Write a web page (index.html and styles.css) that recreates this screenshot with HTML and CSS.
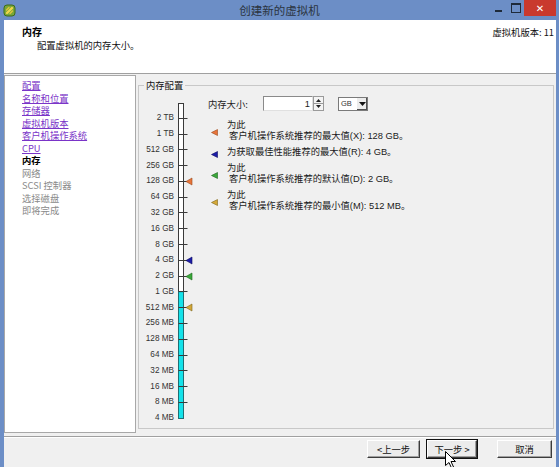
FILE: index.html
```html
<!DOCTYPE html>
<html lang="zh-CN">
<head>
<meta charset="utf-8">
<title>创建新的虚拟机</title>
<link rel="stylesheet" href="styles.css">
</head>
<body>
<div class="titlebar">
  <svg class="app-icon" viewBox="0 0 13 13" width="13" height="13">
    <rect x="1" y="1" width="11" height="11" rx="3" fill="#79a83a" stroke="#3f6a18" stroke-width="1"/>
    <path d="M4 9 L9 4" stroke="#f2d64a" stroke-width="2.4" stroke-linecap="round"/>
    <path d="M3.5 6 L6 3.5 M7 9.5 L9.5 7" stroke="#e8c53a" stroke-width="1.2" stroke-linecap="round"/>
  </svg>
  <div class="title">创建新的虚拟机</div>
  <div class="controls">
    <span class="ctl ctl-min"></span>
    <span class="ctl ctl-max"></span>
    <span class="ctl ctl-close">✕</span>
  </div>
</div>
<div class="client">
  <div class="header">
    <div class="header-text">
      <div class="h-title">内存</div>
      <div class="h-sub">配置虚拟机的内存大小。</div>
    </div>
    <div class="h-version">虚拟机版本: 11</div>
  </div>
  <div class="main">
    <nav class="steps">
      <a class="step link" href="#">配置</a>
      <a class="step link" href="#">名称和位置</a>
      <a class="step link" href="#">存储器</a>
      <a class="step link" href="#">虚拟机版本</a>
      <a class="step link" href="#">客户机操作系统</a>
      <a class="step link" href="#">CPU</a>
      <span class="step current">内存</span>
      <span class="step off">网络</span>
      <span class="step off">SCSI 控制器</span>
      <span class="step off">选择磁盘</span>
      <span class="step off">即将完成</span>
    </nav>
    <fieldset class="group">
      <legend>内存配置</legend>
      <div class="group-inner">
        <div class="scale">
          <div class="scale-labels">
            <span>2 TB</span><span>1 TB</span><span>512 GB</span><span>256 GB</span><span>128 GB</span>
            <span>64 GB</span><span>32 GB</span><span>16 GB</span><span>8 GB</span><span>4 GB</span>
            <span>2 GB</span><span>1 GB</span><span>512 MB</span><span>256 MB</span><span>128 MB</span>
            <span>64 MB</span><span>32 MB</span><span>16 MB</span><span>8 MB</span><span>4 MB</span>
          </div>
          <svg class="scale-bar" width="20" height="322" viewBox="0 0 20 322">
            <rect x="2.5" y="2.5" width="5" height="315" fill="#fff" stroke="#3a3a3a"/>
            <rect x="3" y="190.7" width="4" height="126.8" fill="#14e2ea"/>
            <rect x="2.5" y="190.7" width="5" height="126.8" fill="none" stroke="#1f6f74"/>
            <g stroke="#3a3a3a" stroke-width="1">
              <line x1="2.5" y1="17.5" x2="11.5" y2="17.5"/>
              <line x1="2.5" y1="33.5" x2="11.5" y2="33.5"/>
              <line x1="2.5" y1="48.5" x2="11.5" y2="48.5"/>
              <line x1="2.5" y1="64.5" x2="11.5" y2="64.5"/>
              <line x1="2.5" y1="80.5" x2="11.5" y2="80.5"/>
              <line x1="2.5" y1="96.5" x2="11.5" y2="96.5"/>
              <line x1="2.5" y1="111.5" x2="11.5" y2="111.5"/>
              <line x1="2.5" y1="127.5" x2="11.5" y2="127.5"/>
              <line x1="2.5" y1="143.5" x2="11.5" y2="143.5"/>
              <line x1="2.5" y1="159.5" x2="11.5" y2="159.5"/>
              <line x1="2.5" y1="175.5" x2="11.5" y2="175.5"/>
              <line x1="2.5" y1="190.5" x2="11.5" y2="190.5"/>
              <line x1="2.5" y1="206.5" x2="11.5" y2="206.5"/>
              <line x1="2.5" y1="222.5" x2="11.5" y2="222.5"/>
              <line x1="2.5" y1="238.5" x2="11.5" y2="238.5"/>
              <line x1="2.5" y1="254.5" x2="11.5" y2="254.5"/>
              <line x1="2.5" y1="269.5" x2="11.5" y2="269.5"/>
              <line x1="2.5" y1="285.5" x2="11.5" y2="285.5"/>
              <line x1="2.5" y1="301.5" x2="11.5" y2="301.5"/>
            </g>
            <polygon points="10,80.5 16,77 16,84" fill="#e8743a" stroke="#9a4a1c" stroke-width="0.6"/>
            <polygon points="10,159.5 16,156 16,163" fill="#1c1ca8" stroke="#0c0c60" stroke-width="0.6"/>
            <polygon points="10,175.5 16,172 16,179" fill="#3aa83a" stroke="#1c641c" stroke-width="0.6"/>
            <polygon points="10,206.5 16,203 16,210" fill="#d4a838" stroke="#7e6418" stroke-width="0.6"/>
          </svg>
        </div>
        <div class="config">
          <div class="size-row">
            <span class="size-label">内存大小:</span>
            <div class="num-input"><span>1</span></div>
            <div class="spinner">
              <svg width="9" height="13" viewBox="0 0 9 13">
                <path d="M2 5 L4.5 2 L7 5 Z" fill="#222"/>
                <line x1="0" y1="6.5" x2="9" y2="6.5" stroke="#9a9a9a"/>
                <path d="M2 8 L4.5 11 L7 8 Z" fill="#222"/>
              </svg>
            </div>
            <div class="unit-select">
              <span class="unit-val">GB</span>
              <span class="unit-btn">
                <svg width="7" height="4" viewBox="0 0 7 4"><path d="M0 0 H7 L3.5 4 Z" fill="#111"/></svg>
              </span>
            </div>
          </div>
          <ul class="recs">
            <li class="rec">
              <svg class="mk" width="7" height="7" viewBox="0 0 7 7"><polygon points="0.5,3.5 6.5,0.5 6.5,6.5" fill="#e8743a" stroke="#9a4a1c" stroke-width="0.6"/></svg>
              <div class="rec-text"><div>为此</div><div class="l2">客户机操作系统推荐的最大值(X): 128 GB。</div></div>
            </li>
            <li class="rec">
              <svg class="mk" width="7" height="7" viewBox="0 0 7 7"><polygon points="0.5,3.5 6.5,0.5 6.5,6.5" fill="#1c1ca8" stroke="#0c0c60" stroke-width="0.6"/></svg>
              <div class="rec-text"><div>为获取最佳性能推荐的最大值(R): 4 GB。</div></div>
            </li>
            <li class="rec">
              <svg class="mk" width="7" height="7" viewBox="0 0 7 7"><polygon points="0.5,3.5 6.5,0.5 6.5,6.5" fill="#3aa83a" stroke="#1c641c" stroke-width="0.6"/></svg>
              <div class="rec-text"><div>为此</div><div class="l2">客户机操作系统推荐的默认值(D): 2 GB。</div></div>
            </li>
            <li class="rec">
              <svg class="mk" width="7" height="7" viewBox="0 0 7 7"><polygon points="0.5,3.5 6.5,0.5 6.5,6.5" fill="#d4a838" stroke="#7e6418" stroke-width="0.6"/></svg>
              <div class="rec-text"><div>为此</div><div class="l2">客户机操作系统推荐的最小值(M): 512 MB。</div></div>
            </li>
          </ul>
        </div>
      </div>
    </fieldset>
  </div>
  <div class="footer">
    <button class="btn btn-back">&lt;上一步</button>
    <button class="btn btn-next">下一步 &gt;</button>
    <button class="btn btn-cancel">取消</button>
  </div>
</div>
<svg class="cursor" width="12" height="18" viewBox="0 0 12 18">
  <path d="M0.5 0.5 L0.5 14.5 L4 11.5 L6.5 17 L8.5 16 L6 10.5 L10.5 10.5 Z" fill="#fff" stroke="#000" stroke-width="1"/>
</svg>
</body>
</html>
```

FILE: styles.css
```css
* { box-sizing: border-box; }
html, body { margin: 0; padding: 0; }
body {
  width: 559px;
  height: 467px;
  overflow: hidden;
  position: relative;
  background: #6c8ec6;
  font-family: "Liberation Sans", "Noto Sans CJK SC", sans-serif;
  font-size: 9.3px;
  color: #1c1c1c;
}

/* title bar */
.titlebar {
  height: 20px;
  display: grid;
  grid-template-columns: 1fr auto 1fr;
  align-items: center;
}
.app-icon { margin-left: 3px; display: block; }
.title {
  font-family: "Noto Sans CJK SC", sans-serif;
  font-size: 11.5px;
  line-height: 20px;
  color: #2b3440;
}
.controls {
  justify-self: end;
  align-self: start;
  display: flex;
  margin-right: 3px;
}
.ctl {
  width: 17px;
  height: 16px;
  display: flex;
  align-items: center;
  justify-content: center;
}
.ctl-min::before {
  content: "";
  width: 7px;
  height: 2px;
  margin-top: 5px;
  background: #1e2a3a;
}
.ctl-max::before {
  content: "";
  width: 8px;
  height: 7px;
  border: 1px solid #1e2a3a;
  border-top-width: 2px;
}
.ctl-close {
  width: 32px;
  background: #c9392e;
  color: #fff;
  font-size: 10px;
  font-family: "DejaVu Sans", sans-serif;
  font-weight: bold;
}

/* client */
.client {
  margin: 0 3px 0 4px;
  height: 447px;
  background: #f0f0f0;
  display: flex;
  flex-direction: column;
}
.header {
  height: 54px;
  flex: none;
  background: #fff;
  border-bottom: 1px solid #a0a0a0;
  display: flex;
  justify-content: space-between;
  padding: 6px 2px 0 18px;
  font-family: "Noto Sans CJK SC", sans-serif;
}
.h-title { font-weight: bold; font-size: 10px; line-height: 12px; color: #000; }
.h-sub { margin: 1px 0 0 15px; line-height: 12px; color: #111; }
.h-version { line-height: 12px; color: #111; }

.main {
  height: 362px;
  flex: none;
  display: flex;
  align-items: flex-start;
  gap: 2px;
  padding-top: 1px;
}
.steps {
  width: 132px;
  height: 358px;
  background: #fff;
  border: 1px solid #a8a8a8;
  padding: 3px 0 0 17px;
  display: flex;
  flex-direction: column;
  align-items: flex-start;
  font-family: "Noto Sans CJK SC", sans-serif;
}
.step { height: 12.5px; line-height: 12.5px; white-space: nowrap; }
.step.link { color: #7a34c8; text-decoration: underline; }
.step.current { font-weight: bold; color: #000; }
.step.off { color: #8a8a8a; }

.group {
  margin: 4px 0 0 0;
  padding: 0;
  width: 416px;
  height: 350px;
  min-width: 0;
  border: 1px solid #c8c8c8;
}
.group legend {
  margin-left: 5px;
  padding: 0 2px;
  line-height: 12px;
  font-family: "Noto Sans CJK SC", sans-serif;
  color: #111;
}
.group-inner { display: flex; align-items: flex-start; }

.scale { display: flex; margin-top: 10px; }
.scale-labels {
  width: 37px;
  padding: 9.3px 2px 0 0;
  display: flex;
  flex-direction: column;
  align-items: flex-end;
  font-family: "Liberation Sans", sans-serif;
  font-size: 8.2px;
  color: #333;
}
.scale-labels span { height: 15.79px; line-height: 15.79px; white-space: nowrap; }
.scale-bar { display: block; }

.config { margin-left: 12px; padding-top: 5px; }
.size-row { display: flex; align-items: center; height: 15px; }
.size-label { width: 55px; font-family: "Noto Sans CJK SC", sans-serif; }
.num-input {
  width: 50px;
  height: 15px;
  background: #fff;
  border: 1px solid #8a8a8a;
  border-right-color: #e0e0e0;
  border-bottom-color: #e0e0e0;
  display: flex;
  align-items: center;
  justify-content: flex-end;
  padding-right: 2px;
}
.spinner {
  width: 11px;
  height: 15px;
  border: 1px solid #9a9a9a;
  background: #f4f4f4;
  display: flex;
  align-items: center;
  justify-content: center;
}
.spinner svg { display: block; }
.unit-select {
  margin-left: 14px;
  width: 30px;
  height: 14px;
  background: #fff;
  border: 1px solid #7a7a7a;
  display: flex;
  align-items: stretch;
  justify-content: space-between;
}
.unit-val { font-size: 7.5px; line-height: 12px; padding-left: 2px; color: #333; }
.unit-btn {
  width: 11px;
  background: #ececec;
  border-left: 1px solid #fff;
  box-shadow: inset -1px -1px 0 #505050;
  display: flex;
  align-items: center;
  justify-content: center;
}
.unit-btn svg { display: block; }

.recs {
  list-style: none;
  margin: 9px 0 0 3px;
  padding: 0;
  display: flex;
  flex-direction: column;
  gap: 5px;
}
.rec { display: flex; align-items: center; gap: 9px; }
.mk { display: block; flex: none; margin-top: 3px; }
.rec-text { line-height: 11px; white-space: nowrap; color: #1a1a1a; }
.rec-text .l2 { padding-left: 2px; }

/* footer */
.footer {
  flex: 1;
  border-top: 1px solid #a0a0a0;
  box-shadow: inset 0 1px 0 #fff;
  display: flex;
  justify-content: flex-end;
  align-items: flex-start;
  padding: 3px 4px 0 0;
}
.btn {
  height: 18px;
  margin: 0;
  padding: 0;
  background: #ececec;
  border: 1px solid;
  border-color: #fff #3c3c3c #3c3c3c #fff;
  box-shadow: inset -1px -1px 0 #a0a0a0;
  font-family: "Noto Sans CJK SC", sans-serif;
  font-size: 9.3px;
  line-height: 16px;
  color: #111;
}
.btn-back { width: 53px; }
.btn-next { width: 50px; margin-left: 7px; outline: 1px solid #111; }
.btn-cancel { width: 55px; margin-left: 20px; }

.cursor { position: absolute; left: 445px; top: 451px; }
```
